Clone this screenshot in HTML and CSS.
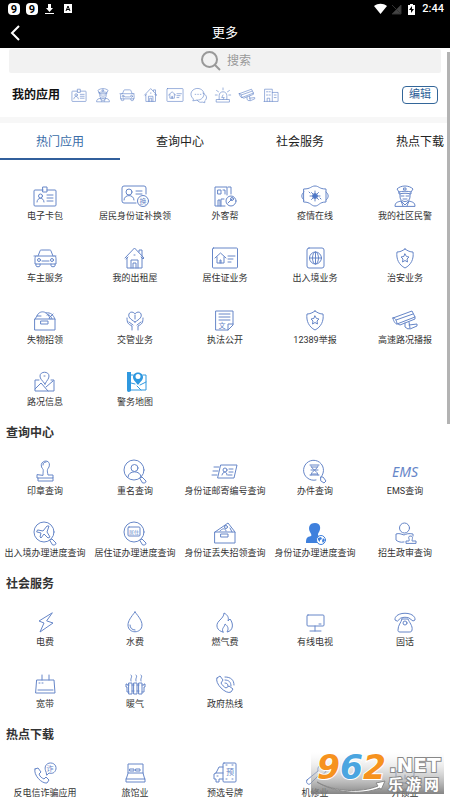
FILE: index.html
```html
<!DOCTYPE html>
<html lang="zh-CN">
<head>
<meta charset="utf-8">
<meta name="viewport" content="width=device-width, initial-scale=1">
<title>更多</title>
<link rel="stylesheet" href="styles.css">
</head>
<body>
<svg class="defs" aria-hidden="true">
  <symbol id="card" viewBox="0 0 28 28"><path d="M12 8H4a1 1 0 0 0-1 1v14a1 1 0 0 0 1 1h20a1 1 0 0 0 1-1V9a1 1 0 0 0-1-1h-8M12 5h4v5h-4zM6 20c0-5 7-5 7 0M16 13h6M16 16h6M16 19h6"/><circle cx="9.500" cy="14" r="2"/></symbol>
  <symbol id="police" viewBox="0 0 28 28"><path d="M8 10 6 7c4-4 12-4 16 0l-2 3c-3-1-9-1-12 0zM8 10v2c4-1 8-1 12 0v-2M9 12v3c0 6 10 6 10 0v-3M10 14h3M15 14h3M12 17h4M4 24c0-4 3-4 6-5l4 4 4-4c3 1 6 1 6 5zM10 19l2 5M18 19l-2 5M13 6h2v2h-2z"/></symbol>
  <symbol id="car" viewBox="0 0 28 28"><path d="M7 12 9 7c0-1 1-1 2-1h7c1 0 2 0 2 1l2 5M3 12h22M5 12c-1 1-1 2-1 3v5h21v-5c0-1 0-2-1-3M11 17h7M5 20v2c0 1 4 1 4 0v-2M20 20v2c0 1 4 1 4 0v-2"/><circle cx="8" cy="16" r="1.500"/><circle cx="21" cy="16" r="1.500"/></symbol>
  <symbol id="house" viewBox="0 0 28 28"><path d="M4 14 13.500 4 23 14l-1 1-2-2M5 15l2-2M6 14v10h15V13M18 8V6h3v6M10 24v-8h7v8M12 24v-5h3v5M13 11h1"/></symbol>
  <symbol id="residence" viewBox="0 0 28 28"><rect x="1.500" y="4" width="25" height="20" rx="1"/><path d="m4 14 5.500-5 5.500 5M6 13v6h7v-6M9 19v-3h1v3M17 12h7M17 15h5M17 18h3"/></symbol>
  <symbol id="camera" viewBox="0 0 28 28"><path d="M2 12 21 5l3 6-18 7c-2 0-4-4-4-6zM2 12c2-1 4 3 4 6M5 14l17-6M7 18l2 1 15-6v-2M14 17v4l3 2 2-1-1-6M18 19l8-1v2l-7 3"/></symbol>
  <symbol id="shield" viewBox="0 0 28 28"><path d="M14 5c3 2 5 3 8 3 1 7-2 13-8 16C8 21 5 15 6 8c3 0 5-1 8-3zM14 10l1.500 2.500 2.500.500-2 2 .500 3-2.500-1.500-2.500 1.500.500-3-2-2 2.500-.500z"/></symbol>
  <symbol id="lens" viewBox="0 0 28 28"><circle cx="13" cy="13" r="10"/><path d="m19 21 2-1 4 4c0 2-1 2-3 2z"/></symbol>
  <symbol id="crate" viewBox="0 0 28 28"><path d="M4 13h20v11H4zM10 15h7v3h-7z"/></symbol>
</svg>

<div class="app">
  <header class="top">
    <div class="status">
      <svg class="status-left" viewBox="0 0 70 14" aria-hidden="true"><rect x="1" y="1" width="12" height="12" rx="4"/><rect x="19" y="1" width="12" height="12" rx="4"/><text x="7" y="11">9</text><text x="25" y="11">9</text><path d="M41 2h3v4h2l-3.500 4L39 6h2zM38 11h9v1h-9zM57 2h8v9h-8z"/><path class="cut" d="m59 9 2-5 2 5M60 7.500h2"/></svg>
      <span class="status-right">
        <svg viewBox="0 0 48 14" aria-hidden="true"><path d="M0 4c4-3 9-3 13 0l-6.500 8z"/><path class="dim" d="M18 12 27 3v9zM18 3l9 9"/><path d="M34 3h2V2h3v1h2v10h-7z"/><path class="bolt" d="m38 4-3 4h2v3l3-4h-2z"/></svg>
        <span>2:44</span>
      </span>
    </div>
    <div class="bar">
      <button class="back" type="button" aria-label="返回"><svg viewBox="0 0 10 16"><path d="M9 1 2 8l7 7"/></svg></button>
      <h1>更多</h1>
    </div>
  </header>

  <main class="page">
    <label class="search">
      <svg viewBox="0 0 20 20" aria-hidden="true"><circle cx="8.500" cy="8.500" r="7.500"/><path d="m14 14 5 5"/></svg>
      <input type="text" placeholder="搜索" aria-label="搜索">
    </label>

    <section class="mine">
      <h2>我的应用</h2>
      <div class="mini">
        <svg><use href="#card"/></svg>
        <svg><use href="#police"/></svg>
        <svg><use href="#car"/></svg>
        <svg><use href="#house"/></svg>
        <svg><use href="#residence"/></svg>
        <svg viewBox="0 0 28 28"><path d="M5 20c-9-8 0-18 9-16 12 3 9 18-3 18l-6 1zM20 11c7 3 7 9 3 12v3l-4-1c-3 1-6 0-8-3M8 13h1M12 13h1M16 13h1"/></svg>
        <svg viewBox="0 0 28 28"><path d="M8 21v-6c0-8 12-8 12 0v6M4 21h20v4H4zM14 3v3M4 7l3 2M24 7l-3 2M2 14h3M23 14h3M14 14l-2 4h4l-2 3"/></svg>
        <svg><use href="#camera"/></svg>
        <svg viewBox="0 0 28 28"><path d="M4 24V5h12v19M16 10h9v14H3M8 24v-5h4v5M7 9h2M11 9h2M7 14h2M11 14h2M19 14h3M19 18h3"/></svg>
      </div>
      <button class="edit" type="button">编辑</button>
    </section>

    <nav class="tabs">
      <a class="on" href="#hot">热门应用</a>
      <a href="#query">查询中心</a>
      <a href="#social">社会服务</a>
      <a href="#download">热点下载</a>
    </nav>

    <section class="grid" id="hot">
      <a href="#"><svg><use href="#card"/></svg>电子卡包</a>
      <a href="#"><svg viewBox="0 0 28 28"><path d="M15 21H3a2 2 0 0 1-2-2V6a2 2 0 0 1 2-2h20a2 2 0 0 1 2 2v6M3 18c0-6 10-6 10 0M15 9h6M15 12h6"/><circle cx="8" cy="10" r="3"/><circle cx="22" cy="19" r="5.500"/><text class="tiny" x="22" y="22">换</text></svg>居民身份证补换领</a>
      <a href="#"><svg viewBox="0 0 28 28"><path d="M16 13V5H4v19h10M7 24v-6h2v6M10 24v-7h3M17 5h3v7M7 8h3v4H7zM12 8h2v4M17 21l4-4"/><circle cx="20" cy="19" r="5"/><circle cx="21" cy="17" r="1.500"/></svg>外客帮</a>
      <a href="#"><svg viewBox="0 0 28 28"><path d="M3 7c7 0 7-3 11-3s4 3 11 3v13c-7 0-7 4-11 4s-4-4-11-4zM3 10c-3 2-3 6 0 8M25 10c3 2 3 6 0 8M14 9v10M9 14h10M10.500 10.500l7 7M17.500 10.500l-7 7M8 10l1 1M20 17l-1-1"/><circle class="fill" cx="14" cy="14" r="2.500"/></svg>疫情在线</a>
      <a href="#"><svg><use href="#police"/></svg>我的社区民警</a>

      <a href="#"><svg><use href="#car"/></svg>车主服务</a>
      <a href="#"><svg><use href="#house"/></svg>我的出租屋</a>
      <a href="#"><svg><use href="#residence"/></svg>居住证业务</a>
      <a href="#"><svg viewBox="0 0 28 28"><rect x="6" y="4" width="17" height="20" rx="2"/><circle cx="14.500" cy="14" r="6"/><ellipse cx="14.500" cy="14" rx="3" ry="6"/><path d="M8.500 14h12M14.500 8v12"/></svg>出入境业务</a>
      <a href="#"><svg><use href="#shield"/></svg>治安业务</a>

      <a href="#"><svg viewBox="0 0 28 28"><use href="#crate"/><path d="m4 13 2-3c2-6 11-6 13 3M6 10h4M15 7c5-1 7 2 9 6M16 9c2-1 4 1 5 4M18 12l4-4"/></svg>失物招领</a>
      <a href="#"><svg viewBox="0 0 28 28"><path d="M14 16c-5-3-7-5-6-8 1-3 5-2 6 0 1-2 5-3 6 0 1 3-1 5-6 8zM14 9v4M6 12c0 5 1 6 5 8v4M22 12c0 5-1 6-5 8v4M8 16l4 3M20 16l-4 3"/></svg>交管业务</a>
      <a href="#"><svg viewBox="0 0 28 28"><path d="M5 5h17v14l-5 5H5zM22 18h-5v6M8 8h11M8 11h11M8 14h11"/><text class="tiny" x="11" y="22">文</text></svg>执法公开</a>
      <a href="#"><svg><use href="#shield"/></svg>12389举报</a>
      <a href="#"><svg><use href="#camera"/></svg>高速路况播报</a>

      <a href="#"><svg viewBox="0 0 28 28"><path d="M14 16c-3-4-5-5-5-8 0-5 9-5 9 0 0 3-2 4-4 8zM8 12H4v11h19V12h-3M4 21l6-6 7 8M15 19l7-6M13 8h1"/></svg>路况信息</a>
      <a href="#"><svg class="map" viewBox="0 0 28 28"><path class="fill" fill-rule="evenodd" d="M6 4h4v19l-2 1c-2 0-2-1-2-3zM17 17c-3-4-5-5-5-8 0-6 10-6 10 0 0 3-2 4-5 8zM17 6a2.500 2.500 0 0 0 0 5 2.500 2.500 0 0 0 0-5"/><path d="M10 7h2M22 7h3v15H10M10 15l4 1M19 17l6-3M16 18l4 4"/></svg>警务地图</a>
    </section>

    <h2 class="title">查询中心</h2>
    <section class="grid" id="query">
      <a href="#"><svg viewBox="0 0 28 28"><path d="M12 18c0-5 1-5-1-7-4-8 10-10 7-1-2 3-2 3-1 8h5v3H6v-3zM7 21v3h15v-3M12 8c0-2 1-3 3-3"/></svg>印章查询</a>
      <a href="#"><svg viewBox="0 0 28 28"><use href="#lens"/><circle cx="13.500" cy="11" r="3.500"/><path d="M7 20c0-7 13-7 13 0"/></svg>重名查询</a>
      <a href="#"><svg viewBox="0 0 28 28"><path d="M10 8h16l-3 13H7zM3 10h5M2 14h5M1 18h5M11 18c1-4 5-4 5 0M18 12h4M18 15h4M17 18h4"/><circle cx="14" cy="13" r="2"/></svg>身份证邮寄编号查询</a>
      <a href="#"><svg viewBox="0 0 28 28"><path d="M20 20a10 10 0 1 0-5 3M20 20h2l3 4-2 2-3-2zM9 8h9M9 18h9M10 9c0 3 7 5 7 9M17 9c0 3-7 5-7 9M11 10h5M11 17h5M10 13h7"/></svg>办件查询</a>
      <a href="#"><svg viewBox="0 0 28 28"><text class="ems" x="14" y="20">EMS</text></svg>EMS查询</a>

      <a href="#"><svg viewBox="0 0 28 28"><use href="#lens"/><path d="m7 11 5 1 4-5h2l-2 6 3 5-2 1-4-4-3 4-1-1 1-4-4-1z"/></svg>出入境办理进度查询</a>
      <a href="#"><svg viewBox="0 0 28 28"><use href="#lens"/><rect x="7" y="8" width="12" height="9" rx="1"/><text class="micro" x="13" y="15">居住</text></svg>居住证办理进度查询</a>
      <a href="#"><svg viewBox="0 0 28 28"><use href="#crate"/><path d="m4 13 13-9 7 9M9 12c2-3 6-3 6 0M19 9l2 4"/><circle cx="15" cy="8" r="1.500"/></svg>身份证丢失招领查询</a>
      <a href="#"><svg class="person" viewBox="0 0 28 28"><path class="fill" d="M14 4c6 0 6 6 4 9-2 3-1 4 2 5l1 6H5c0-5 1-6 5-7 1-1 0-2-1-4C7 9 8 4 14 4z"/><circle class="globe" cx="20" cy="21" r="4.500"/><path class="fill" d="m17 19 3-1 1 2-2 1v2l-2-2zM22 19l2 2-2 3-1-2z"/></svg>身份证办理进度查询</a>
      <a href="#"><svg viewBox="0 0 28 28"><circle cx="13.500" cy="9" r="5"/><path d="M13 23c-4 1-7-1-8-2v-6c3-1 5 0 8 1 2-1 5-2 9-1v2M15 24v-2h3c1-2-2-4 1-5 4 0 2 3 2 5h4v2z"/></svg>招生政审查询</a>
    </section>

    <h2 class="title">社会服务</h2>
    <section class="grid" id="social">
      <a href="#"><svg viewBox="0 0 28 28"><path d="M21 5 8 13l5 2-4 9 13-9-6-2z"/></svg>电费</a>
      <a href="#"><svg viewBox="0 0 28 28"><path d="M14 4c4 5 7 9 7 13 0 9-14 9-14 0 0-4 3-8 7-13zM9 17c0 3 2 5 5 5"/></svg>水费</a>
      <a href="#"><svg viewBox="0 0 28 28"><path d="M12 24c-6-1-8-7-4-11 3-3 5-5 5-8 4 2 5 5 4 8l2-2c4 5 3 12-3 13 2-3 1-6-2-8 0 3-4 4-2 8z"/></svg>燃气费</a>
      <a href="#"><svg viewBox="0 0 28 28"><rect x="6" y="7" width="17" height="11" rx="1"/><path d="M14 18v5M9 23h11M18 16h2"/></svg>有线电视</a>
      <a href="#"><svg viewBox="0 0 28 28"><path d="M6 13 4 12c-1-9 21-9 20 0l-2 1-4-3c-3-1-5-1-8 0zM11 11h6c1 3 5 7 4 11 0 2-2 2-3 2H9c-2 0-2-1-2-2 0-5 3-7 4-11z"/><circle cx="14" cy="15" r="2"/></svg>固话</a>

      <a href="#"><svg viewBox="0 0 28 28"><path d="M6 10h17l1 13H5zM11 5v5M18 5v5M7 20h15M8 13h1M11 13h1"/></svg>宽带</a>
      <a href="#"><svg viewBox="0 0 28 28"><path d="M8 13h3v11H8zM13 13h3v11h-3zM18 13h3v11h-3zM11 15h2M16 15h2M11 21h2M16 21h2M8 15H6v-1H5v3h1v5h2M21 15h2v-1h1v3h-1v5h-2M10 5c2 2-1 3 0 6M15 5c2 2-1 3 0 6M20 5c2 2-1 3 0 6"/></svg>暖气</a>
      <a href="#"><svg viewBox="0 0 28 28"><path d="m6 8 3-2 3 4-2 3c1 2 3 4 5 5l3-2 4 3-2 3C15 25 3 13 6 8zM14 13c2 0 3 1 3 3M14 10c4 0 6 2 6 6M14 7c6 0 9 3 9 8"/></svg>政府热线</a>
    </section>

    <h2 class="title">热点下载</h2>
    <section class="grid" id="download">
      <a href="#"><svg viewBox="0 0 28 28"><path d="m4 10 3-1 3 4-2 2c1 3 3 4 5 5l2-2 3 3-2 3C11 25 2 16 4 10zM15 13c-5-11 11-12 10-3-1 4-4 5-7 4l-2 2z"/><text class="tiny" x="19" y="12">诈</text></svg>反电信诈骗应用</a>
      <a href="#"><svg viewBox="0 0 28 28"><path d="M7 14V5h15v9l2 7v2H5v-2zM5 20h19M7 14h15M9 10h4v2H9zM15 10h4v2h-4z"/></svg>旅馆业</a>
      <a href="#"><svg viewBox="0 0 28 28"><path d="M12 8H8l-3 6-2 1v5h2v3h3v-3h4M5 14h7M6 17h1"/><rect x="12" y="4" width="13" height="19" rx="1"/><path d="M15 6h1M21 6h1M15 20h1M21 20h1"/><text class="plate" x="19" y="16">预</text></svg>预选号牌</a>
      <a href="#"><svg viewBox="0 0 28 28"><path d="M6 21 17 12c-1-4 2-7 6-6l-3 3 2 2 3-2c1 4-2 7-6 6l-9 9c-2 3-6 0-4-3z"/></svg>机修业</a>
      <a href="#"><svg viewBox="0 0 28 28"><rect x="5" y="12" width="18" height="12" rx="1"/><path d="M9 12V9c0-5 9-5 9 0v3M14 16v4"/></svg>开锁业</a>
    </section>
    <i class="thumb" aria-hidden="true"></i>
  </main>

  <svg class="mark" viewBox="0 0 133 42" role="img" aria-label="962.NET 乐游网">
    <defs><linearGradient id="shade" x1="0" y1="0" x2="0" y2="1"><stop offset="0" stop-color="#fff" stop-opacity=".2"/><stop offset="1" stop-color="#777" stop-opacity=".9"/></linearGradient></defs>
    <rect width="133" height="42" fill="url(#shade)"/>
    <text class="num" x="6" y="27"><tspan class="orange">9</tspan><tspan class="blue">6</tspan><tspan class="orange">2</tspan></text>
    <path class="swoosh" d="M6 30c17 10 44 11 61 4l-2-3 9-2-4 9-1-2C49 44 22 40 6 30z"/>
    <text class="net" x="78" y="20">.NET</text>
    <text class="cn" x="77" y="38">乐</text><text class="cn" x="95" y="38">游</text><text class="cn" x="113" y="38">网</text>
  </svg>
</div>
</body>
</html>
```

FILE: styles.css
```css
* { box-sizing: border-box; }

body {
  margin: 0;
  background: #fff;
  color: #333;
  font-family: Roboto, "Noto Sans CJK SC", sans-serif;
}

h1, h2 { margin: 0; }
a { color: inherit; text-decoration: none; }
button, input { font: inherit; }

.defs { position: absolute; width: 0; height: 0; }

.app {
  position: relative;
  display: flex;
  flex-direction: column;
  height: 100vh;
  overflow: hidden;
}

/* Header */
.top { background: #000; color: #fff; }

.status {
  display: flex;
  justify-content: space-between;
  align-items: center;
  height: 18px;
  padding: 0 6px 0 7px;
}
.status-left { width: 70px; height: 14px; fill: #fff; }
.status-left text { fill: #000; font-size: 11px; font-weight: 700; text-anchor: middle; }
.status-left .cut { fill: none; stroke: #000; stroke-width: 1; }
.status-right { display: flex; align-items: center; font-size: 11px; font-weight: 500; line-height: 18px; }
.status-right svg { width: 48px; height: 14px; fill: #fff; }
.status-right .dim { fill: #444; stroke: #333; }
.status-right .bolt { fill: #000; }

.bar {
  display: grid;
  grid-template-columns: 30px 1fr 30px;
  align-items: center;
  height: 30px;
}
.bar h1 { grid-column: 2; text-align: center; font-size: 13px; font-weight: 400; line-height: 30px; }
.back { padding: 0 0 0 10px; border: 0; background: none; height: 30px; }
.back svg { display: block; width: 10px; height: 16px; fill: none; stroke: #fff; stroke-width: 2; }

/* Scrolling page */
.page { position: relative; flex: 1; min-height: 0; overflow-y: auto; overflow-x: hidden; scrollbar-width: none; }

.thumb {
  position: absolute;
  top: 4px;
  right: 0;
  width: 3px;
  height: 372px;
  background: #b3b3b3;
}

.search {
  display: flex;
  justify-content: center;
  align-items: center;
  gap: 6px;
  height: 24px;
  margin: 1px 9px 0;
  padding-left: 6px;
  border-radius: 2px;
  background: #f2f2f2;
}
.search svg { width: 20px; height: 20px; fill: none; stroke: #999; stroke-width: 2; }
.search input {
  width: 28px;
  padding: 0;
  border: 0;
  outline: 0;
  background: none;
  font-size: 12px;
  line-height: 20px;
}
.search input::placeholder { color: #999; opacity: 1; }

.mine {
  display: flex;
  align-items: center;
  height: 44px;
  padding: 0 12px;
}
.mine h2 { font-size: 12px; font-weight: 700; color: #111; line-height: 20px; }
.mini { display: flex; flex: 1; gap: 6px; padding-left: 10px; }
.mini svg { width: 18px; height: 18px; }
.edit {
  width: 36px;
  height: 18px;
  padding: 0;
  border: 1px solid #336699;
  border-radius: 4px;
  background: #fff;
  color: #2d5f98;
  font-size: 11px;
  line-height: 16px;
}

.tabs {
  display: flex;
  height: 43px;
  overflow: hidden;
  border-top: 6px solid #f7f7f7;
}
.tabs a {
  flex: 0 0 120px;
  border-bottom: 2px solid transparent;
  color: #222;
  font-size: 12px;
  line-height: 38px;
  text-align: center;
}
.tabs .on { border-color: #315f9c; color: #3a6da8; }

/* Application grid */
.grid {
  display: grid;
  grid-template-columns: repeat(5, 1fr);
  grid-auto-rows: 62px;
}
#hot { padding-top: 12px; }
.grid a {
  display: flex;
  flex-direction: column;
  align-items: center;
  padding-top: 10px;
  font-size: 9px;
  line-height: 12px;
  white-space: nowrap;
}
.grid svg { width: 28px; height: 28px; }
.grid svg, .mini svg {
  flex: none;
  overflow: visible;
  fill: none;
  stroke: #6686c8;
  stroke-width: 1;
  stroke-linejoin: round;
  stroke-linecap: round;
}
.grid svg text { fill: #6686c8; stroke: none; text-anchor: middle; }
.grid .fill { fill: #4a76c8; }
.grid .tiny { font-size: 7px; }
.grid .micro { font-size: 5px; }
.grid .plate { font-size: 8px; }
.grid .ems { font-family: "Noto Sans", sans-serif; font-size: 14px; font-style: italic; }
.grid .map { stroke: #2f98df; }
.grid .map .fill { fill: #2f98df; stroke: none; }
.grid .person { stroke: none; }
.grid .person .fill { fill: #3f80dd; }
.grid .person .globe { fill: #fff; stroke: #3f80dd; }

.title {
  padding-left: 6px;
  color: #333;
  font-size: 12px;
  font-weight: 700;
  line-height: 27px;
}

/* Site mark over the page corner */
.mark { position: absolute; right: 6px; bottom: 6px; width: 133px; height: 42px; overflow: visible; }
.mark text { font-weight: 700; }
.mark .num { font-family: "DejaVu Sans", sans-serif; font-size: 33px; font-style: italic; stroke: #fff; stroke-width: 2; paint-order: stroke; }
.mark .orange { fill: #f6921e; }
.mark .blue { fill: #4aa5e0; }
.mark .swoosh { fill: #fff; stroke: #888; }
.mark .net, .mark .cn { fill: #fff; stroke: #888; stroke-width: 2; paint-order: stroke; }
.mark .net { font-family: "DejaVu Sans", sans-serif; font-size: 20px; }
.mark .cn { font-size: 15px; }
```
